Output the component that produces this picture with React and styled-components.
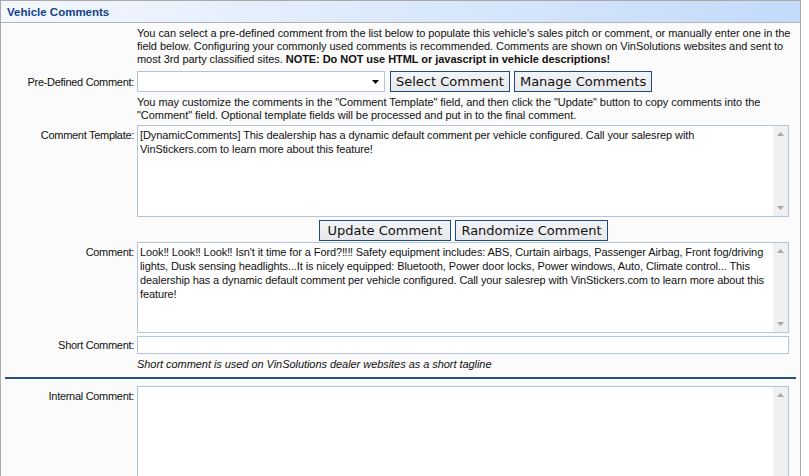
import styled, { createGlobalStyle } from 'styled-components';

const GlobalStyle = createGlobalStyle`
    body {
        margin: 0;
        background: #fff;
        font-family: "Liberation Sans", Arial, sans-serif;
        font-size: 11px;
        color: #000;
    }
`;

const Panel = styled.section`
    width: 801px;
    border: 1px solid #a9a9a9;
    border-bottom: none;
    background: #fbfbfb;
    height: 476px;
    box-sizing: border-box;
    overflow: hidden;
`;

const Header = styled.div`
    height: 21px;
    border-bottom: 1px solid #b4b4b4;
    background: linear-gradient(to right, #f4f8fd, #c3dafa);
    display: flex;
    align-items: center;
    padding-left: 6px;
    font-weight: bold;
    font-size: 11.5px;
    color: #15428b;
`;

const Body = styled.div`
    padding: 4px 11px 0 0;
`;

const Row = styled.div`
    display: flex;
    align-items: ${p => (p.$center ? 'center' : 'flex-start')};
    margin-top: ${p => p.$mt || 0}px;
`;

const Label = styled.div`
    width: 136px;
    flex: none;
    box-sizing: border-box;
    padding-right: 3px;
    padding-top: ${p => p.$pt || 0}px;
    text-align: right;
    line-height: 14px;
    letter-spacing: -0.3px;
    color: #111;
`;

const Field = styled.div`
    flex: 1;
    min-width: 0;
    display: flex;
    justify-content: ${p => (p.$center ? 'center' : 'flex-start')};
    gap: 4px;
`;

const Note = styled.div`
    line-height: 13px;
    white-space: nowrap;
    letter-spacing: -0.05px;
    color: #111;
    font-style: ${p => (p.$italic ? 'italic' : 'normal')};
    b {
        font-weight: bold;
    }
`;

const SelectBox = styled.div`
    width: 248px;
    height: 21px;
    box-sizing: border-box;
    border: 1px solid #b5c4d6;
    background: #fff;
    display: flex;
    justify-content: flex-end;
    align-items: center;
    padding-right: 5px;
    margin-right: 1px;
`;

const Button = styled.button`
    height: 21px;
    padding: 0 ${p => p.$pad || 5}px;
    border: 1px solid #1d4d80;
    border-radius: 0;
    background: linear-gradient(#f3f4f7, #e6e8ec);
    font-family: "DejaVu Sans", Verdana, sans-serif;
    font-size: 13px;
    color: #111;
    line-height: 19px;
`;

const TextBox = styled.div`
    height: ${p => p.$h}px;
    box-sizing: border-box;
    border: 1px solid #b5c4d6;
    background: #fff;
    display: flex;
`;

const TextContent = styled.div`
    flex: 1;
    padding: 2px 2px;
    line-height: 14px;
    white-space: nowrap;
    letter-spacing: -0.1px;
    color: #111;
`;

const ScrollBar = styled.div`
    width: 15px;
    flex: none;
    background: #f0f0f0;
    display: flex;
    flex-direction: column;
    justify-content: space-between;
    align-items: center;
    padding: 6px 0;
    box-sizing: border-box;
`;

const ShortInput = styled.div`
    height: 18px;
    width: 100%;
    box-sizing: border-box;
    border: 1px solid #b5c4d6;
    background: #fff;
`;

const Divider = styled.hr`
    margin: 6px 4px 0 4px;
    border: none;
    height: 2px;
    background: #244f80;
`;

const Arrow = ({ up, color = '#a8a8a8', w = 7, h = 4 }) => (
    <svg width={w} height={h} viewBox="0 0 7 4">
        <polygon points={up ? '0,4 7,4 3.5,0' : '0,0 7,0 3.5,4'} fill={color} />
    </svg>
);

const TextArea = ({ h, children }) => (
    <TextBox $h={h}>
        <TextContent>{children}</TextContent>
        <ScrollBar>
            <Arrow up />
            <Arrow />
        </ScrollBar>
    </TextBox>
);

const App = () => {
    return (
        <Panel>
            <GlobalStyle />
            <Header>Vehicle Comments</Header>
            <Body>
                <Row>
                    <Label />
                    <Field>
                        <Note>
                            You can select a pre-defined comment from the list below to populate this vehicle's sales pitch or comment, or manually enter one in the<br />
                            field below. Configuring your commonly used comments is recommended. Comments are shown on VinSolutions websites and sent to<br />
                            most 3rd party classified sites. <b>NOTE: Do NOT use HTML or javascript in vehicle descriptions!</b>
                        </Note>
                    </Field>
                </Row>
                <Row $center $mt={5}>
                    <Label>Pre-Defined Comment:</Label>
                    <Field>
                        <SelectBox>
                            <Arrow color="#000" />
                        </SelectBox>
                        <Button>Select Comment</Button>
                        <Button>Manage Comments</Button>
                    </Field>
                </Row>
                <Row $mt={4}>
                    <Label />
                    <Field>
                        <Note>
                            You may customize the comments in the "Comment Template" field, and then click the "Update" button to copy comments into the<br />
                            "Comment" field. Optional template fields will be processed and put in to the final comment.
                        </Note>
                    </Field>
                </Row>
                <Row $mt={3}>
                    <Label $pt={3}>Comment Template:</Label>
                    <Field>
                        <div style={{ flex: 1 }}>
                            <TextArea h={92}>
                                [DynamicComments] This dealership has a dynamic default comment per vehicle configured. Call your salesrep with<br />
                                VinStickers.com to learn more about this feature!
                            </TextArea>
                        </div>
                    </Field>
                </Row>
                <Row $mt={3}>
                    <Label />
                    <Field $center>
                        <Button $pad={8}>Update Comment</Button>
                        <Button>Randomize Comment</Button>
                    </Field>
                </Row>
                <Row $mt={1}>
                    <Label $pt={3}>Comment:</Label>
                    <Field>
                        <div style={{ flex: 1 }}>
                            <TextArea h={91}>
                                Look‼ Look‼ Look‼ Isn't it time for a Ford?‼‼ Safety equipment includes: ABS, Curtain airbags, Passenger Airbag, Front fog/driving<br />
                                lights, Dusk sensing headlights...It is nicely equipped: Bluetooth, Power door locks, Power windows, Auto, Climate control... This<br />
                                dealership has a dynamic default comment per vehicle configured. Call your salesrep with VinStickers.com to learn more about this<br />
                                feature!
                            </TextArea>
                        </div>
                    </Field>
                </Row>
                <Row $center $mt={3}>
                    <Label>Short Comment:</Label>
                    <Field>
                        <ShortInput />
                    </Field>
                </Row>
                <Row $mt={4}>
                    <Label />
                    <Field>
                        <Note $italic>Short comment is used on VinSolutions dealer websites as a short tagline</Note>
                    </Field>
                </Row>
            </Body>
            <Divider />
            <Body>
                <Row $mt={3}>
                    <Label $pt={3}>Internal Comment:</Label>
                    <Field>
                        <div style={{ flex: 1 }}>
                            <TextArea h={120} />
                        </div>
                    </Field>
                </Row>
            </Body>
        </Panel>
    );
};

export default App;
